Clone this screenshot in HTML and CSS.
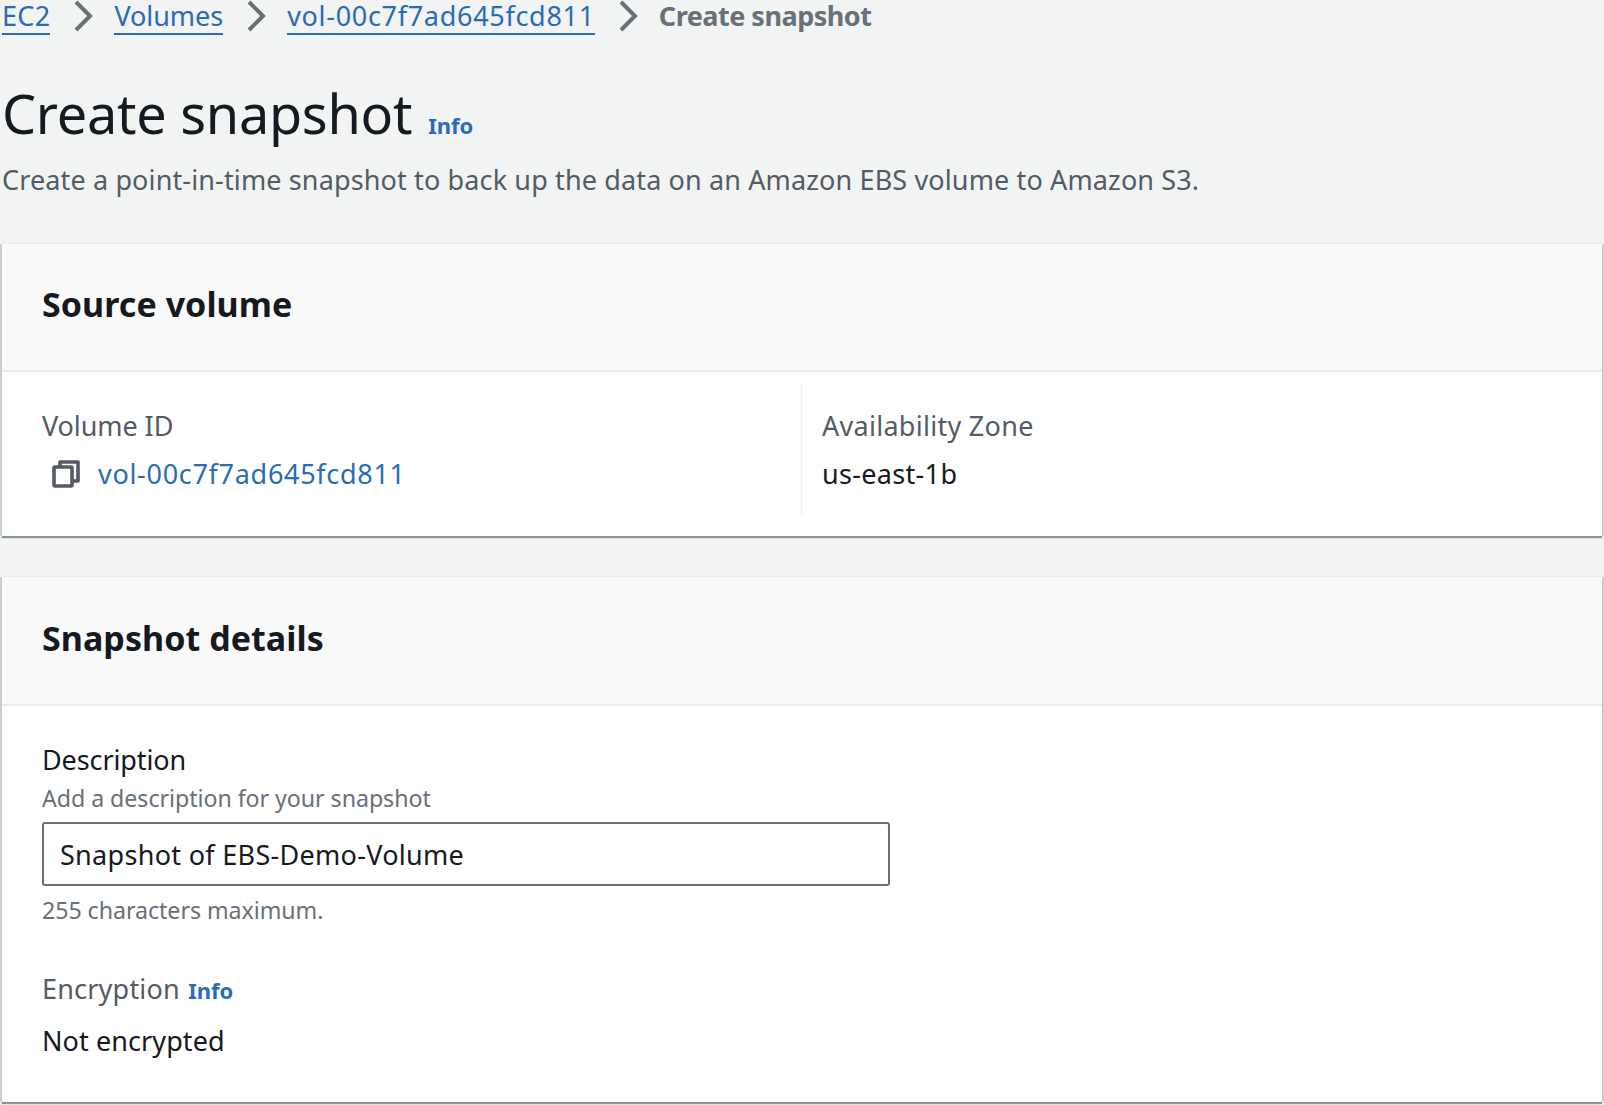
FILE: index.html
```html
<!DOCTYPE html>
<html lang="en">
<head>
<meta charset="utf-8">
<title>Create snapshot</title>
<link rel="stylesheet" href="styles.css">
</head>
<body>
<nav class="crumbs">
  <a class="crumb crumb-ec2" href="#">EC2</a>
  <svg class="chev" viewBox="0 0 20 32"><path d="M2 2l14 14L2 30"/></svg>
  <a class="crumb" href="#">Volumes</a>
  <svg class="chev" viewBox="0 0 20 32"><path d="M2 2l14 14L2 30"/></svg>
  <a class="crumb crumb-id" href="#">vol-00c7f7ad645fcd811</a>
  <svg class="chev" viewBox="0 0 20 32"><path d="M2 2l14 14L2 30"/></svg>
  <span class="crumb-current">Create snapshot</span>
</nav>
<header class="head">
  <div class="title-row"><h1>Create snapshot</h1><a class="info info-title" href="#">Info</a></div>
  <p class="lead">Create a point-in-time snapshot to back up the data on an Amazon EBS volume to Amazon S3.</p>
</header>
<section class="card card-source">
  <div class="card-head"><h2>Source volume</h2></div>
  <div class="cols">
    <div class="col col-left">
      <div class="key">Volume ID</div>
      <div class="val val-id">
        <svg class="copy" viewBox="0 0 30 30"><path d="M9 8V3h18v19h-6"/><rect x="3" y="8" width="18" height="19" rx="1"/></svg>
        <a class="link" href="#">vol-00c7f7ad645fcd811</a>
      </div>
    </div>
    <div class="col col-right">
      <div class="key key-az">Availability Zone</div>
      <div class="val val-az">us-east-1b</div>
    </div>
  </div>
</section>
<section class="card card-details">
  <div class="card-head card-head-details"><h2>Snapshot details</h2></div>
  <div class="form">
    <div class="label">Description</div>
    <div class="hint">Add a description for your snapshot</div>
    <input class="input" type="text" value="Snapshot of EBS-Demo-Volume">
    <div class="hint hint-after">255 characters maximum.</div>
    <div class="key key-enc">Encryption <a class="info info-inline" href="#">Info</a></div>
    <div class="val val-enc">Not encrypted</div>
  </div>
</section>
</body>
</html>
```
FILE: styles.css
```css
* { box-sizing: border-box; }
html, body { height: 100%; }
body {
  margin: 0;
  height: 1105px;
  overflow: hidden;
  background: #f2f3f3;
  color: #16191f;
  font-family: "Noto Sans", sans-serif;
  padding: 0 2px;
}
a { color: #2a6cb5; text-decoration: none; }
.crumbs {
  display: flex;
  align-items: flex-start;
  height: 34px;
  font-size: 27px;
}
.crumb { border-bottom: 2px solid #2a6cb5; height: 35px; line-height: 32px; letter-spacing: -0.05px; }
.crumb-ec2 { letter-spacing: 0.3px; }
.crumb-id { letter-spacing: 0.7px; }
.chev { width: 20px; height: 32px; margin: 0 20px 0 24px; fill: none; stroke: #687078; stroke-width: 4; flex: none; }
.crumb-current { color: #687078; font-weight: 700; line-height: 32px; letter-spacing: -0.5px; }
.head { margin-top: 44px; }
.title-row { display: flex; align-items: baseline; gap: 16px; height: 70px; }
h1 { margin: 0; font-size: 54px; font-weight: 400; line-height: 70px; letter-spacing: -0.27px; }
.info { font-weight: 700; }
.info-title { font-size: 22px; }
.lead { margin: 14px 0 0; font-size: 27px; line-height: 36px; color: #545b64; letter-spacing: 0.13px; }
.card {
  background: #fff;
  box-shadow: 0 -1px 0 #e9ebeb, 0 2px 1px #8b9497, 2px 0 0 #cdd1d1, -2px 0 0 #cdd1d1;
}
.card-source { margin-top: 46px; height: 292px; }
.card-details { margin-top: 41px; height: 525px; }
.card-head {
  height: 128px;
  padding: 0 40px 7px;
  display: flex;
  align-items: center;
  background: #fafafa;
  border-bottom: 2px solid #eaeded;
}
.card-head-details { height: 129px; padding-bottom: 6px; }
h2 { margin: 0; font-size: 34px; font-weight: 700; line-height: 44px; letter-spacing: 0.05px; }
.cols { display: flex; padding-top: 12px; }
.col { height: 131px; padding-top: 24px; }
.col-left { width: 800px; padding-left: 40px; border-right: 1px solid #eaeded; }
.col-right { padding-left: 20px; }
.key { font-size: 27px; line-height: 36px; color: #545b64; letter-spacing: -0.08px; }
.key-az { letter-spacing: 0.28px; }
.val { font-size: 27px; line-height: 36px; margin-top: 12px; letter-spacing: -0.08px; }
.val-az { letter-spacing: 0.32px; }
.val-id { display: flex; align-items: center; gap: 17px; padding-left: 9px; }
.link { letter-spacing: 0.7px; }
.copy { width: 30px; height: 30px; fill: #fff; stroke: #545b64; stroke-width: 3.6; stroke-linejoin: round; flex: none; }
.form { padding: 36px 40px 0; }
.label { font-size: 27px; line-height: 36px; letter-spacing: -0.1px; }
.hint { font-size: 23.2px; line-height: 32px; color: #687078; margin-top: 4px; letter-spacing: -0.05px; }
.input {
  display: block;
  width: 848px;
  height: 64px;
  margin-top: 8px;
  padding: 0 16px;
  border: 2px solid #687078;
  border-radius: 3px;
  background: #fff;
  color: #16191f;
  font: 400 27px "Noto Sans", sans-serif;
  letter-spacing: 0.3px;
}
.hint-after { margin-top: 8px; }
.key-enc { margin-top: 45px; letter-spacing: 0.2px; }
.info-inline { font-size: 22px; margin-left: 1px; letter-spacing: 0; }
.val-enc { margin-top: 15px; letter-spacing: 0.08px; }
```
